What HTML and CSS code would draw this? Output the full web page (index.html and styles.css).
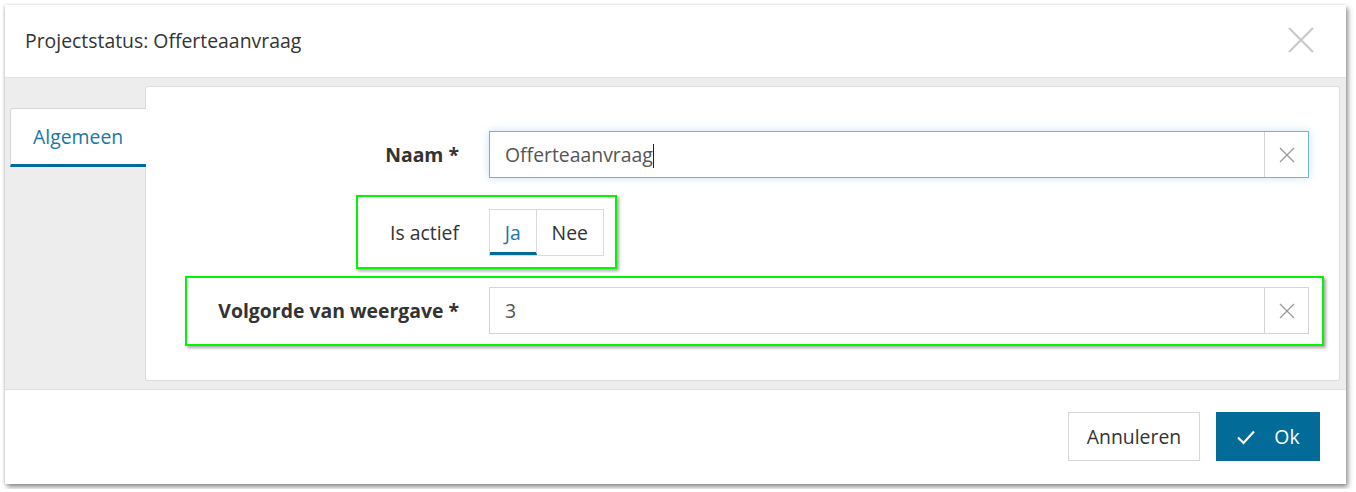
FILE: index.html
```html
<!DOCTYPE html>
<html lang="nl">
<head>
<meta charset="utf-8">
<title>Projectstatus</title>
<link rel="stylesheet" href="styles.css">
</head>
<body>
<div class="dialog">
  <div class="dialog-header">
    <h1 class="dialog-title">Projectstatus: Offerteaanvraag</h1>
    <button class="close-btn" aria-label="Sluiten">
      <svg width="28" height="28" viewBox="0 0 28 28"><path d="M2 2L26 26M26 2L2 26" stroke="#c8c8c8" stroke-width="2" fill="none"/></svg>
    </button>
  </div>
  <div class="dialog-body">
    <div class="tabs">
      <div class="tab active">Algemeen</div>
    </div>
    <div class="panel">
      <div class="form">
        <label class="label bold">Naam *</label>
        <div class="input focused">
          <span class="input-value">Offerteaanvraag<span class="caret"></span></span>
          <span class="clear"><svg width="16" height="16" viewBox="0 0 16 16"><path d="M1 1L15 15M15 1L1 15" stroke="#9a9a9a" stroke-width="1.3" fill="none"/></svg></span>
        </div>
        <label class="label">Is actief</label>
        <div class="toggle">
          <span class="toggle-opt on">Ja</span>
          <span class="toggle-opt">Nee</span>
        </div>
        <label class="label bold">Volgorde van weergave *</label>
        <div class="input">
          <span class="input-value">3</span>
          <span class="clear"><svg width="16" height="16" viewBox="0 0 16 16"><path d="M1 1L15 15M15 1L1 15" stroke="#9a9a9a" stroke-width="1.3" fill="none"/></svg></span>
        </div>
      </div>
      <div class="mark mark-active"></div>
      <div class="mark mark-order"></div>
    </div>
  </div>
  <div class="dialog-footer">
    <button class="btn">Annuleren</button>
    <button class="btn primary">
      <svg width="20" height="16" viewBox="0 0 20 16"><path d="M2 8.5L7.5 14L18 2.5" stroke="#fff" stroke-width="2.2" fill="none"/></svg>
      <span>Ok</span>
    </button>
  </div>
</div>
</body>
</html>
```
FILE: styles.css
```css
* { box-sizing: border-box; }
html, body { margin: 0; padding: 0; background: #fff; }
body {
  padding: 5px;
  font-family: "Open Sans", "Noto Sans", sans-serif;
  color: #333;
}
.dialog {
  width: 1341px;
  height: 479px;
  background: #fff;
  box-shadow: 2px 3px 5px rgba(0,0,0,0.45), -1px 0 2px rgba(0,0,0,0.12);
  display: flex;
  flex-direction: column;
}
.dialog-header {
  height: 73px;
  border-bottom: 1px solid #e2e2e2;
  display: flex;
  align-items: center;
  justify-content: space-between;
  padding: 0 31px 0 20px;
}
.dialog-title {
  margin: 0;
  font-size: 19.4px;
  font-weight: 400;
  color: #333;
  letter-spacing: 0;
  margin-top: -2px;
}
.close-btn {
  background: none;
  border: 0;
  padding: 0;
  width: 28px;
  height: 28px;
  display: flex;
  margin-top: -2px;
}
.dialog-body {
  background: #ededed;
  height: 312px;
  border-bottom: 1px solid #e0e0e0;
  display: flex;
  padding: 8px 6px 0 5px;
}
.tabs {
  width: 136px;
  padding-top: 22px;
  position: relative;
  z-index: 1;
  margin-right: -1px;
}
.tab {
  height: 59px;
  background: #fff;
  border: 1px solid #d6d6d6;
  border-right: 0;
  border-bottom: 3px solid #006b97;
  border-radius: 3px 0 0 0;
  color: #1a78a3;
  font-size: 19.4px;
  padding: 14px 0 0 22px;
}
.panel {
  flex: 1;
  height: 295px;
  background: #fff;
  border: 1px solid #dcdcdc;
  border-radius: 3px;
  position: relative;
  padding: 44px 30px 0 0;
}
.form {
  display: grid;
  grid-template-columns: 313px 1fr;
  column-gap: 30px;
  row-gap: 31px;
  align-items: center;
}
.label {
  text-align: right;
  font-size: 19.4px;
  color: #333;
}
.label.bold { font-weight: 700; }
.input {
  height: 47px;
  border: 1px solid #d4d4d4;
  display: flex;
  align-items: stretch;
  background: #fff;
}
.input.focused {
  border-color: #6fb0e6;
  box-shadow: 0 0 8px rgba(102,170,230,0.35);
}
.input-value {
  flex: 1;
  display: flex;
  align-items: center;
  padding-left: 15px;
  font-size: 19.4px;
  color: #555;
}
.caret {
  display: inline-block;
  width: 1px;
  height: 24px;
  background: #222;
  margin-left: 0;
  position: relative;
  top: 1px;
}
.clear {
  width: 44px;
  border-left: 1px solid #d4d4d4;
  display: flex;
  align-items: center;
  justify-content: center;
}
.toggle {
  display: flex;
  height: 47px;
  width: 115px;
  border: 1px solid #dadada;
}
.toggle-opt {
  display: flex;
  align-items: center;
  justify-content: center;
  font-size: 19.4px;
  color: #333;
  width: 67px;
}
.toggle-opt.on {
  width: 47px;
  color: #1a78a3;
  border-right: 1px solid #dadada;
  border-bottom: 3px solid #006b97;
  padding-top: 3px;
}
.mark {
  position: absolute;
  border: 2px solid #00f700;
  box-shadow: 2px 2px 3px rgba(0,0,0,0.35);
  pointer-events: none;
}
.mark-active {
  left: 210px;
  top: 108px;
  width: 261px;
  height: 74px;
}
.mark-order {
  left: 39px;
  top: 189px;
  width: 1139px;
  height: 70px;
}
.dialog-footer {
  flex: 1;
  display: flex;
  justify-content: flex-end;
  align-items: flex-start;
  gap: 16px;
  padding: 22px 26px 0 0;
}
.btn {
  height: 49px;
  font-family: "Open Sans", "Noto Sans", sans-serif;
  font-size: 19.4px;
  color: #333;
  background: #fff;
  border: 1px solid #d8d8d8;
  padding: 0;
  width: 132px;
  display: flex;
  align-items: center;
  justify-content: center;
}
.btn.primary {
  width: 104px;
  background: #036b98;
  border-color: #036b98;
  color: #fff;
  gap: 18px;
  padding: 0 0 0 0;
  font-size: 19.4px;
}
.btn.primary svg { margin-top: 1px; }
```
